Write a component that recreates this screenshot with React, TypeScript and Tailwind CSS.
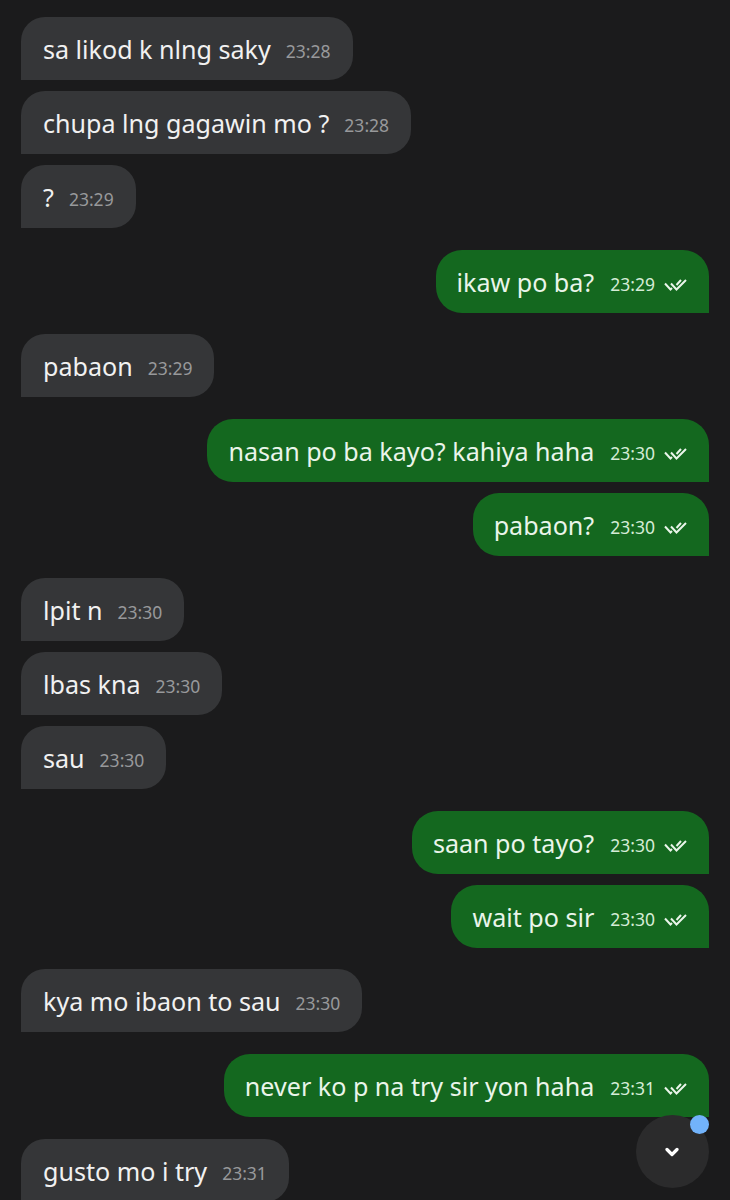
const messages = [
  { text: "sa likod k nlng saky", time: "23:28", out: false, gap: "" },
  { text: "chupa lng gagawin mo ?", time: "23:28", out: false, gap: "mt-[11px]" },
  { text: "?", time: "23:29", out: false, gap: "mt-[11px]" },
  { text: "ikaw po ba?", time: "23:29", out: true, gap: "mt-[22px]" },
  { text: "pabaon", time: "23:29", out: false, gap: "mt-[21px]" },
  { text: "nasan po ba kayo? kahiya haha", time: "23:30", out: true, gap: "mt-[22px]" },
  { text: "pabaon?", time: "23:30", out: true, gap: "mt-[11px]" },
  { text: "lpit n", time: "23:30", out: false, gap: "mt-[22px]" },
  { text: "lbas kna", time: "23:30", out: false, gap: "mt-[11px]" },
  { text: "sau", time: "23:30", out: false, gap: "mt-[11px]" },
  { text: "saan po tayo?", time: "23:30", out: true, gap: "mt-[22px]" },
  { text: "wait po sir", time: "23:30", out: true, gap: "mt-[11px]" },
  { text: "kya mo ibaon to sau", time: "23:30", out: false, gap: "mt-[21px]" },
  { text: "never ko p na try sir yon haha", time: "23:31", out: true, gap: "mt-[22px]" },
  { text: "gusto mo i try", time: "23:31", out: false, gap: "mt-[22px]" },
]

function DoubleCheck() {
  return (
    <svg width="23" height="14" viewBox="0 0 23 14" fill="none" stroke="currentColor" strokeWidth="2" className="ml-[9px] mt-[6px] shrink-0">
      <path d="M1 5.5 L6.5 11.5 L8 10" />
      <path d="M7 5.5 L12.5 11.5 L22 2" />
      <path d="M12.5 7 L17 2" />
    </svg>
  )
}

function Bubble({ text, time, out, gap }: { text: string; time: string; out: boolean; gap: string }) {
  return (
    <div className={`flex ${out ? "justify-end" : "justify-start"} ${gap}`}>
      <div
        className={`flex h-[63px] shrink-0 items-center ${
          out
            ? "rounded-t-[26px] rounded-bl-[26px] bg-[#14681f] pl-[21px] pr-[22px] text-[#eaf5ea]"
            : "rounded-t-[24px] rounded-br-[24px] bg-[#353638] pl-[22px] pr-[22px] text-[#f1f1f1]"
        }`}
      >
        <span className="mt-[2px] text-[25.1px] leading-none whitespace-nowrap">{text}</span>
        <span
          className={`mt-[6px] text-[17.5px] leading-none ${
            out ? "ml-[16px] text-[#d5ecd6]" : "ml-[15px] text-[#98999b]"
          }`}
        >
          {time}
        </span>
        {out && <DoubleCheck />}
      </div>
    </div>
  )
}

export default function App() {
  return (
    <div className="relative h-[1200px] w-[730px] overflow-hidden bg-[#1b1b1c] px-[21px] pt-[17px] font-['Noto_Sans',sans-serif]">
      {messages.map((m, i) => (
        <Bubble key={i} {...m} />
      ))}
      <div className="absolute left-[636px] top-[1115px] flex h-[73px] w-[73px] items-center justify-center rounded-full bg-[#2b2b2c]">
        <svg width="14" height="10" viewBox="0 0 14 10" fill="none" stroke="#ffffff" strokeWidth="3.2" strokeLinecap="round" strokeLinejoin="round" className="mr-[2px] mt-[1px]">
          <path d="M2 2.5 L7 7.5 L12 2.5" />
        </svg>
      </div>
      <div className="absolute left-[690px] top-[1115px] h-[19px] w-[19px] rounded-full bg-[#72b3fb]" />
    </div>
  )
}
